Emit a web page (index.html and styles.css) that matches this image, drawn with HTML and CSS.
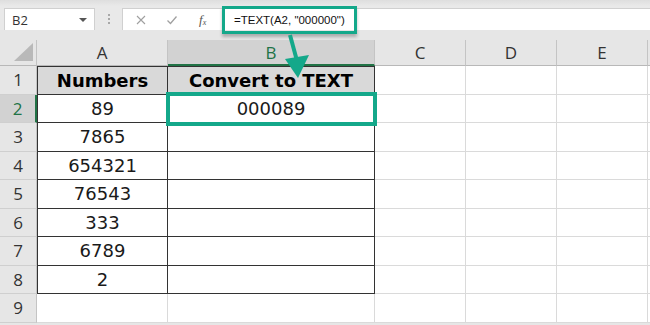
FILE: index.html
```html
<!DOCTYPE html>
<html lang="en">
<head>
    <meta charset="UTF-8">
    <meta name="viewport" content="width=device-width, initial-scale=1.0">
    <title>Convert to TEXT</title>
    <link rel="stylesheet" href="styles.css">
</head>
<body>
    <div class="topbar">
        <div class="name-box">
            <span>B2</span>
            <span class="caret"></span>
        </div>
        <div class="grip">
            <span></span><span></span><span></span>
        </div>
        <div class="formula-bar">
            <div class="fx-buttons">
                <svg class="fx-icon" viewBox="0 0 12 12" fill="none" stroke="currentColor" stroke-width="1.1">
                    <path d="M2 2L10 10M10 2L2 10"></path>
                </svg>
                <svg class="fx-icon" viewBox="0 0 12 12" fill="none" stroke="currentColor" stroke-width="1.3">
                    <path d="M1.5 6.5L4.5 9.5L10.5 2.5"></path>
                </svg>
                <span class="fx-label">f<sub>x</sub></span>
            </div>
            <div class="formula-input">
                <span class="formula-text">=TEXT(A2, "000000")</span>
            </div>
        </div>
    </div>

    <div class="sheet">
        <table class="grid">
            <colgroup>
                <col class="col-rh">
                <col class="col-a">
                <col class="col-b">
                <col class="col-c">
                <col class="col-d">
                <col class="col-e">
                <col class="col-f">
            </colgroup>
            <thead>
                <tr>
                    <th class="corner"><span class="corner-mark"></span></th>
                    <th class="col-head">A</th>
                    <th class="col-head selected">B</th>
                    <th class="col-head">C</th>
                    <th class="col-head">D</th>
                    <th class="col-head">E</th>
                    <th class="col-head"></th>
                </tr>
            </thead>
            <tbody id="gridBody"></tbody>
        </table>

        <svg class="arrow" viewBox="0 0 40 50" fill="none">
            <path d="M17 5L23.5 29" stroke="#14a88a" stroke-width="4"></path>
            <path d="M12 29L36 25L25 48Z" fill="#14a88a"></path>
        </svg>
    </div>

    <script>
        const numbers = ['89', '7865', '654321', '76543', '333', '6789', '2'];

        function renderGrid() {
            const body = document.getElementById('gridBody');
            let html = `
                <tr>
                    <th class="row-head">1</th>
                    <td class="box title">Numbers</td>
                    <td class="box title">Convert to TEXT</td>
                    <td></td><td></td><td></td><td></td>
                </tr>`;

            numbers.forEach((value, i) => {
                const row = i + 2;
                const selected = row === 2 ? ' selected' : '';
                const result = row === 2 ? '<span class="active-cell"></span>000089' : '';
                html += `
                <tr>
                    <th class="row-head${selected}">${row}</th>
                    <td class="box">${value}</td>
                    <td class="box${row === 2 ? ' active' : ''}">${result}</td>
                    <td></td><td></td><td></td><td></td>
                </tr>`;
            });

            html += `
                <tr>
                    <th class="row-head">9</th>
                    <td></td><td></td><td></td><td></td><td></td><td></td>
                </tr>`;

            body.innerHTML = html;
        }

        renderGrid();
    </script>
</body>
</html>
```

FILE: styles.css
```css
body {
    margin: 0;
    background: #e6e6e6;
    font-family: "Open Sans", "Noto Sans", sans-serif;
    color: #222;
    width: 650px;
    height: 325px;
    overflow: hidden;
}

.topbar {
    height: 30px;
    box-sizing: border-box;
    padding-top: 8px;
    display: flex;
    align-items: stretch;
    background: linear-gradient(#dedede, #e9e9e9 6px, #e9e9e9);
}

.name-box {
    width: 91px;
    margin-left: 4px;
    box-sizing: border-box;
    background: #fff;
    border: 1px solid #d0d0d0;
    border-bottom: none;
    display: flex;
    align-items: center;
    justify-content: space-between;
    padding: 0 7px 0 7px;
    font-size: 13px;
    color: #333;
}

.caret {
    width: 0;
    height: 0;
    border-left: 4px solid transparent;
    border-right: 4px solid transparent;
    border-top: 4px solid #555;
}

.grip {
    width: 27px;
    display: flex;
    flex-direction: column;
    align-items: center;
    justify-content: center;
    gap: 2px;
}

.grip span {
    width: 2px;
    height: 2px;
    background: #a8a8a8;
}

.formula-bar {
    flex: 1;
    background: #fff;
    border: 1px solid #d0d0d0;
    border-right: none;
    border-bottom: none;
    display: flex;
    align-items: center;
}

.fx-buttons {
    width: 96px;
    display: flex;
    align-items: center;
    padding-left: 12px;
    gap: 19px;
    color: #a0a0a0;
}

.fx-icon {
    width: 12px;
    height: 12px;
}

.fx-label {
    font-family: "Liberation Serif", serif;
    font-style: italic;
    font-size: 13px;
    color: #555;
    margin-left: 2px;
}

.fx-label sub {
    font-size: 8px;
    vertical-align: -1px;
}

.formula-input {
    flex: 1;
    padding-left: 3px;
    font-family: "Liberation Sans", sans-serif;
    font-size: 11.5px;
    color: #111;
}

.formula-text {
    position: relative;
}

.formula-text::before {
    content: "";
    position: absolute;
    left: -12px;
    right: -12px;
    top: -8px;
    bottom: -8px;
    border: 3.5px solid #14a88a;
    box-shadow: 0 3px 3px rgba(0, 0, 0, 0.25);
}

.sheet {
    position: relative;
    margin-top: 10px;
}

.grid {
    border-collapse: separate;
    border-spacing: 0;
    table-layout: fixed;
    width: 660px;
}

.col-rh { width: 37px; }
.col-a { width: 131px; }
.col-b { width: 207px; }
.col-c { width: 91px; }
.col-d { width: 91px; }
.col-e { width: 91px; }
.col-f { width: 12px; }

.grid th,
.grid td {
    padding: 0;
    box-sizing: border-box;
    border-right: 1px solid #dadada;
    border-bottom: 1px solid #dadada;
    text-align: center;
    vertical-align: middle;
    white-space: nowrap;
    overflow: hidden;
}

.grid thead tr {
    height: 26px;
}

.grid tbody tr {
    height: 28.5px;
}

.grid td {
    background: #fff;
    font-family: "DejaVu Sans", sans-serif;
    font-size: 18px;
    color: #1a1a1a;
}

.col-head {
    background: #e6e6e6;
    font-weight: normal;
    font-size: 17px;
    color: #333;
    border-right-color: #c4c4c4 !important;
    border-bottom-color: #b8b8b8 !important;
}

.col-head.selected {
    background: #d2d2d2;
    color: #217346;
    border-bottom: 2px solid #217346 !important;
}

.corner {
    position: relative;
    background: #e6e6e6;
    border-right-color: #c4c4c4 !important;
    border-bottom-color: #b8b8b8 !important;
}

.corner-mark {
    position: absolute;
    right: 3px;
    bottom: 4px;
    width: 0;
    height: 0;
    border-left: 19px solid transparent;
    border-bottom: 18px solid #b9b9b9;
}

.row-head {
    background: #e6e6e6;
    font-weight: normal;
    font-size: 17px;
    color: #333;
    border-right-color: #c4c4c4 !important;
    border-bottom-color: #cfcfcf !important;
}

.row-head.selected {
    background: #d2d2d2;
    color: #217346;
    border-right: 2px solid #217346 !important;
}

.grid td.box {
    border-right-color: #333;
    border-bottom-color: #333;
}

.grid td.title {
    background: #d9d9d9;
    font-weight: bold;
    color: #000;
}

tbody tr:first-child td.box:first-of-type,
tbody tr:first-child td.box + td.box {
    border-top: 1px solid #333;
}

.grid td.box:first-of-type {
    border-left: 1px solid #333;
}

.grid td.active {
    position: relative;
    overflow: visible;
}

.active-cell {
    position: absolute;
    left: -2px;
    right: -3px;
    top: -3px;
    bottom: -4px;
    border: 4px solid #14a88a;
}

.arrow {
    position: absolute;
    left: 273px;
    top: -10px;
    width: 40px;
    height: 50px;
}
```
